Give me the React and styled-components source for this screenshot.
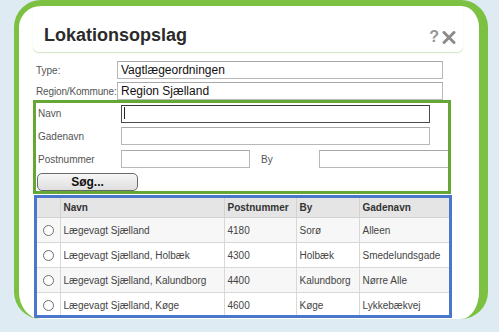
import React from 'react'
import styled, { createGlobalStyle } from 'styled-components'

const rows = [
  { navn: 'Lægevagt Sjælland', post: '4180', by: 'Sorø', gade: 'Alleen' },
  { navn: 'Lægevagt Sjælland, Holbæk', post: '4300', by: 'Holbæk', gade: 'Smedelundsgade' },
  { navn: 'Lægevagt Sjælland, Kalundborg', post: '4400', by: 'Kalundborg', gade: 'Nørre Alle' },
  { navn: 'Lægevagt Sjælland, Køge', post: '4600', by: 'Køge', gade: 'Lykkebækvej' },
]

const App = () => {
  return (
    <>
      <GlobalStyle />
      <Card>
        <Header>
          <Title>Lokationsopslag</Title>
          <Tools>
            <Help>?</Help>
            <svg width="14" height="13" viewBox="0 0 14 13">
              <path d="M2 1.5 L12 11.5 M12 1.5 L2 11.5" stroke="#8c8c8c" strokeWidth="3" strokeLinecap="round" />
            </svg>
          </Tools>
        </Header>

        <FormRows>
          <Row>
            <Label>Type:</Label>
            <Input width="326px" defaultValue="Vagtlægeordningen" readOnly />
          </Row>
          <Row>
            <Label tight>Region/Kommune:</Label>
            <Input width="326px" defaultValue="Region Sjælland" readOnly />
          </Row>
        </FormRows>

        <SearchBox>
          <Row>
            <Label inset>Navn</Label>
            <Caret>
              <Input width="309px" focused />
            </Caret>
          </Row>
          <Row>
            <Label inset>Gadenavn</Label>
            <Input width="309px" />
          </Row>
          <Row>
            <Label inset>Postnummer</Label>
            <Input width="129px" />
            <SideLabel>By</SideLabel>
            <Input width="140px" noRight />
          </Row>
          <Button>Søg...</Button>
        </SearchBox>

        <ResultBox>
          <Table>
            <colgroup>
              <col style={{ width: 23 }} />
              <col style={{ width: 164 }} />
              <col style={{ width: 72 }} />
              <col style={{ width: 63 }} />
              <col style={{ width: 90 }} />
            </colgroup>
            <thead>
              <tr>
                <Th />
                <Th>Navn</Th>
                <Th>Postnummer</Th>
                <Th>By</Th>
                <Th>Gadenavn</Th>
              </tr>
            </thead>
            <tbody>
              {rows.map((r, i) => (
                <Tr key={r.post} shaded={i % 2 === 0}>
                  <Td><Radio /></Td>
                  <Td>{r.navn}</Td>
                  <Td>{r.post}</Td>
                  <Td>{r.by}</Td>
                  <Td>{r.gade}</Td>
                </Tr>
              ))}
            </tbody>
          </Table>
        </ResultBox>
      </Card>
    </>
  )
}

// Styles
const GlobalStyle = createGlobalStyle`
  html, body {
    margin: 0;
    padding: 0;
    background: #deebf3;
    font-family: "Liberation Sans", Arial, sans-serif;
  }
`

const Card = styled.div`
  box-sizing: border-box;
  margin-left: 14px;
  width: 474px;
  height: 319px;
  background: #fff;
  border-style: solid;
  border-color: #7cc142;
  border-width: 6px 9px 0 5px;
  border-radius: 27px;
  padding: 0 16px 0 14px;
  overflow: hidden;
`

const Header = styled.div`
  box-sizing: border-box;
  height: 46px;
  display: flex;
  justify-content: space-between;
  align-items: flex-start;
  padding: 18px 7px 0 11px;
  border-radius: 0 0 6px 6px;
  box-shadow: 0 1px 1px rgba(150, 190, 110, 0.45);
`

const Title = styled.h1`
  margin: 0;
  font-size: 18px;
  line-height: 22px;
  font-weight: 700;
  color: #2b2b2b;
`

const Tools = styled.div`
  display: flex;
  align-items: center;
  gap: 3px;
  margin-top: 6px;
`

const Help = styled.span`
  font-size: 16px;
  line-height: 14px;
  font-weight: 700;
  color: #969696;
`

const FormRows = styled.div`
  display: flex;
  flex-direction: column;
  gap: 3px;
  margin-top: 9px;
`

const Row = styled.div`
  display: flex;
  align-items: center;
  height: 18px;
`

const Label = styled.span`
  box-sizing: border-box;
  width: 84px;
  flex-shrink: 0;
  padding-left: ${({ inset }) => (inset ? '1px' : '3px')};
  font-size: 10px;
  letter-spacing: ${({ tight }) => (tight ? '-0.15px' : '0')};
  color: #555;
  white-space: nowrap;
`

const SideLabel = styled.span`
  box-sizing: border-box;
  width: 69px;
  flex-shrink: 0;
  padding-left: 11px;
  font-size: 10px;
  color: #555;
`

const Input = styled.input`
  box-sizing: border-box;
  flex-shrink: 0;
  width: ${({ width }) => width};
  height: 18px;
  margin: 0;
  padding: 0 3px;
  font-family: "Liberation Sans", Arial, sans-serif;
  font-size: 12px;
  color: #111;
  background: #fff;
  border: 1px solid ${({ focused }) => (focused ? '#4a4a4a' : '#b8b8b8')};
  border-top-color: ${({ focused }) => (focused ? '#3a3a3a' : '#a8a8a8')};
  border-right-width: ${({ noRight }) => (noRight ? 0 : '1px')};
  outline: none;
`

const Caret = styled.div`
  position: relative;
  height: 18px;

  &::after {
    content: '';
    position: absolute;
    left: 3px;
    top: 3px;
    width: 1px;
    height: 12px;
    background: #222;
  }
`

const SearchBox = styled.div`
  box-sizing: border-box;
  width: 418px;
  height: 94px;
  border: 3px solid #64a734;
  padding: 1px 0 0 1px;
  display: flex;
  flex-direction: column;
  gap: 5px;
  overflow: hidden;
`

const Button = styled.button`
  box-sizing: border-box;
  width: 101px;
  height: 18px;
  margin: 0;
  padding: 0;
  border: 1.5px solid #6a6a6a;
  border-radius: 5px;
  background: linear-gradient(#f6f6f6, #dedede);
  font-family: "Liberation Sans", Arial, sans-serif;
  font-size: 12px;
  font-weight: 700;
  color: #111;
`

const ResultBox = styled.div`
  box-sizing: border-box;
  width: 418px;
  height: 123px;
  margin: 1px 0 0 1px;
  border: 3px solid #4a77cc;
  overflow: hidden;
`

const Table = styled.table`
  width: 412px;
  table-layout: fixed;
  border-collapse: collapse;
  font-size: 10px;
`

const Th = styled.th`
  height: 19px;
  padding: 0 3px;
  text-align: left;
  font-weight: 700;
  color: #333;
  background: #e5e5e5;
  border-left: 1px solid #d2d2d2;
  border-bottom: 1px solid #d2d2d2;

  &:first-child {
    border-left: 0;
  }
`

const Tr = styled.tr`
  background: ${({ shaded }) => (shaded ? '#f7f7f7' : '#fff')};
`

const Td = styled.td`
  height: 24px;
  padding: 0 3px;
  color: #444;
  white-space: nowrap;
  border-left: 1px solid #d8d8d8;
  border-bottom: 1px solid #d8d8d8;

  &:first-child {
    border-left: 0;
    padding: 0;
    text-align: center;
  }
`

const Radio = styled.span`
  display: inline-block;
  box-sizing: border-box;
  width: 11px;
  height: 11px;
  margin-top: 3px;
  border: 1px solid #6f6f6f;
  border-radius: 50%;
  background: #fff;
`

export default App
